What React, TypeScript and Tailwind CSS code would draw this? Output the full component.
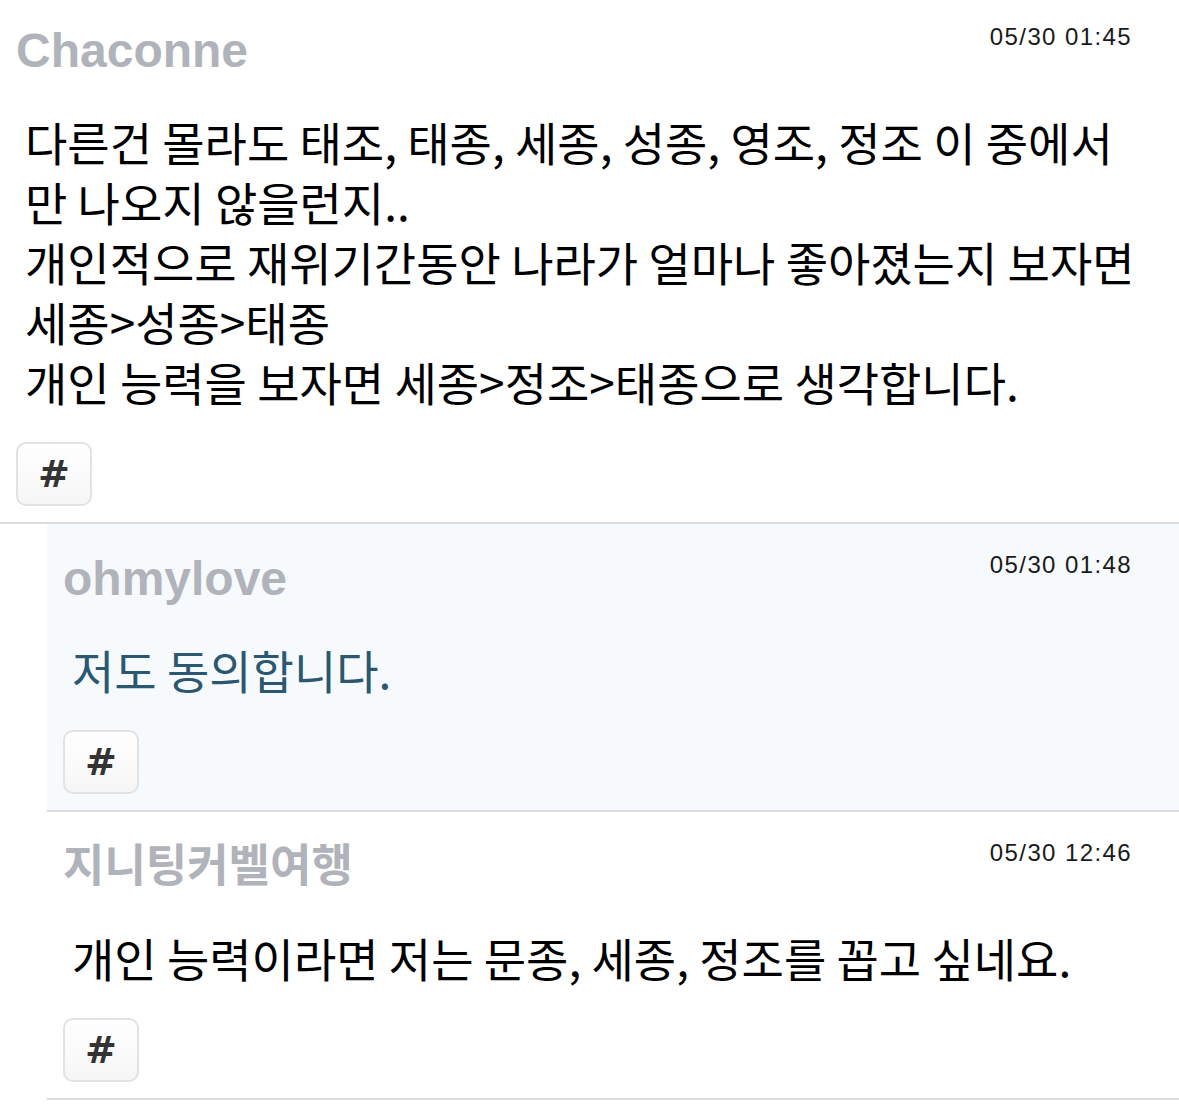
import React from 'react'

type CommentData = {
  author:    string
  time:      string
  body:      string
  nameClass: string
  bodyClass: string
  rowClass:  string
  topClass:  string
}

const comments: CommentData[] = [
  {
    author:    'Chaconne',
    time:      '05/30 01:45',
    body:      '다른건 몰라도 태조, 태종, 세종, 성종, 영조, 정조 이 중에서만 나오지 않을런지..\n개인적으로 재위기간동안 나라가 얼마나 좋아졌는지 보자면\n세종>성종>태종\n개인 능력을 보자면 세종>정조>태종으로 생각합니다.',
    nameClass: 'text-[48px]',
    bodyClass: 'text-black',
    rowClass:  'border-b-2 border-[#dcdcdf]',
    topClass:  'pt-[21px]',
  },
]

const replies: CommentData[] = [
  {
    author:    'ohmylove',
    time:      '05/30 01:48',
    body:      '저도 동의합니다.',
    nameClass: 'text-[48px]',
    bodyClass: 'text-[#2b5870]',
    rowClass:  'border-b-2 border-[#dcdcdf] bg-[#f7fafd]',
    topClass:  'pt-[25px]',
  },
  {
    author:    '지니팅커벨여행',
    time:      '05/30 12:46',
    body:      '개인 능력이라면 저는 문종, 세종, 정조를 꼽고 싶네요.',
    nameClass: 'text-[45px]',
    bodyClass: 'text-black',
    rowClass:  'border-b-2 border-[#dcdcdf]',
    topClass:  'pt-[25px]',
  },
]

function Comment({ c }: { c: CommentData }) {
  return (
    <div className={`pl-4 pr-[47px] pb-4 ${c.rowClass} ${c.topClass}`}>
      {/* 작성자 + 시간 */}
      <div className="flex items-start justify-between h-[58px]">
        <div
          className={`mt-[2px] leading-[56px] font-bold text-[#b0b3ba] ${c.nameClass}`}
          style={{ fontFamily: '"Liberation Sans", "Noto Sans CJK KR", sans-serif' }}
        >
          {c.author}
        </div>
        <div
          className="text-[24px] leading-8 tracking-[1.4px] text-[#1a1a1a]"
          style={{ fontFamily: '"Liberation Sans", sans-serif' }}
        >
          {c.time}
        </div>
      </div>

      <p
        className={`mt-8 ml-[9px] -mr-[10px] text-[46px] leading-[60px] whitespace-pre-line ${c.bodyClass}`}
        style={{ fontFamily: '"Noto Sans CJK KR", sans-serif' }}
      >
        {c.body}
      </p>

      <button
        className="mt-[31px] w-[76px] h-16 flex items-center justify-center rounded-[10px] border-2 border-[#e2e2e2] bg-gradient-to-b from-white to-[#f6f6f6] text-[#333] text-[38px] font-bold"
        style={{ fontFamily: '"DejaVu Sans", sans-serif' }}
      >
        #
      </button>
    </div>
  )
}

export default function App() {
  return (
    <div className="w-[1179px] min-h-[1113px] bg-white">
      {comments.map(c => <Comment key={c.time} c={c} />)}
      <div className="pl-[47px]">
        {replies.map(c => <Comment key={c.time} c={c} />)}
      </div>
    </div>
  )
}
